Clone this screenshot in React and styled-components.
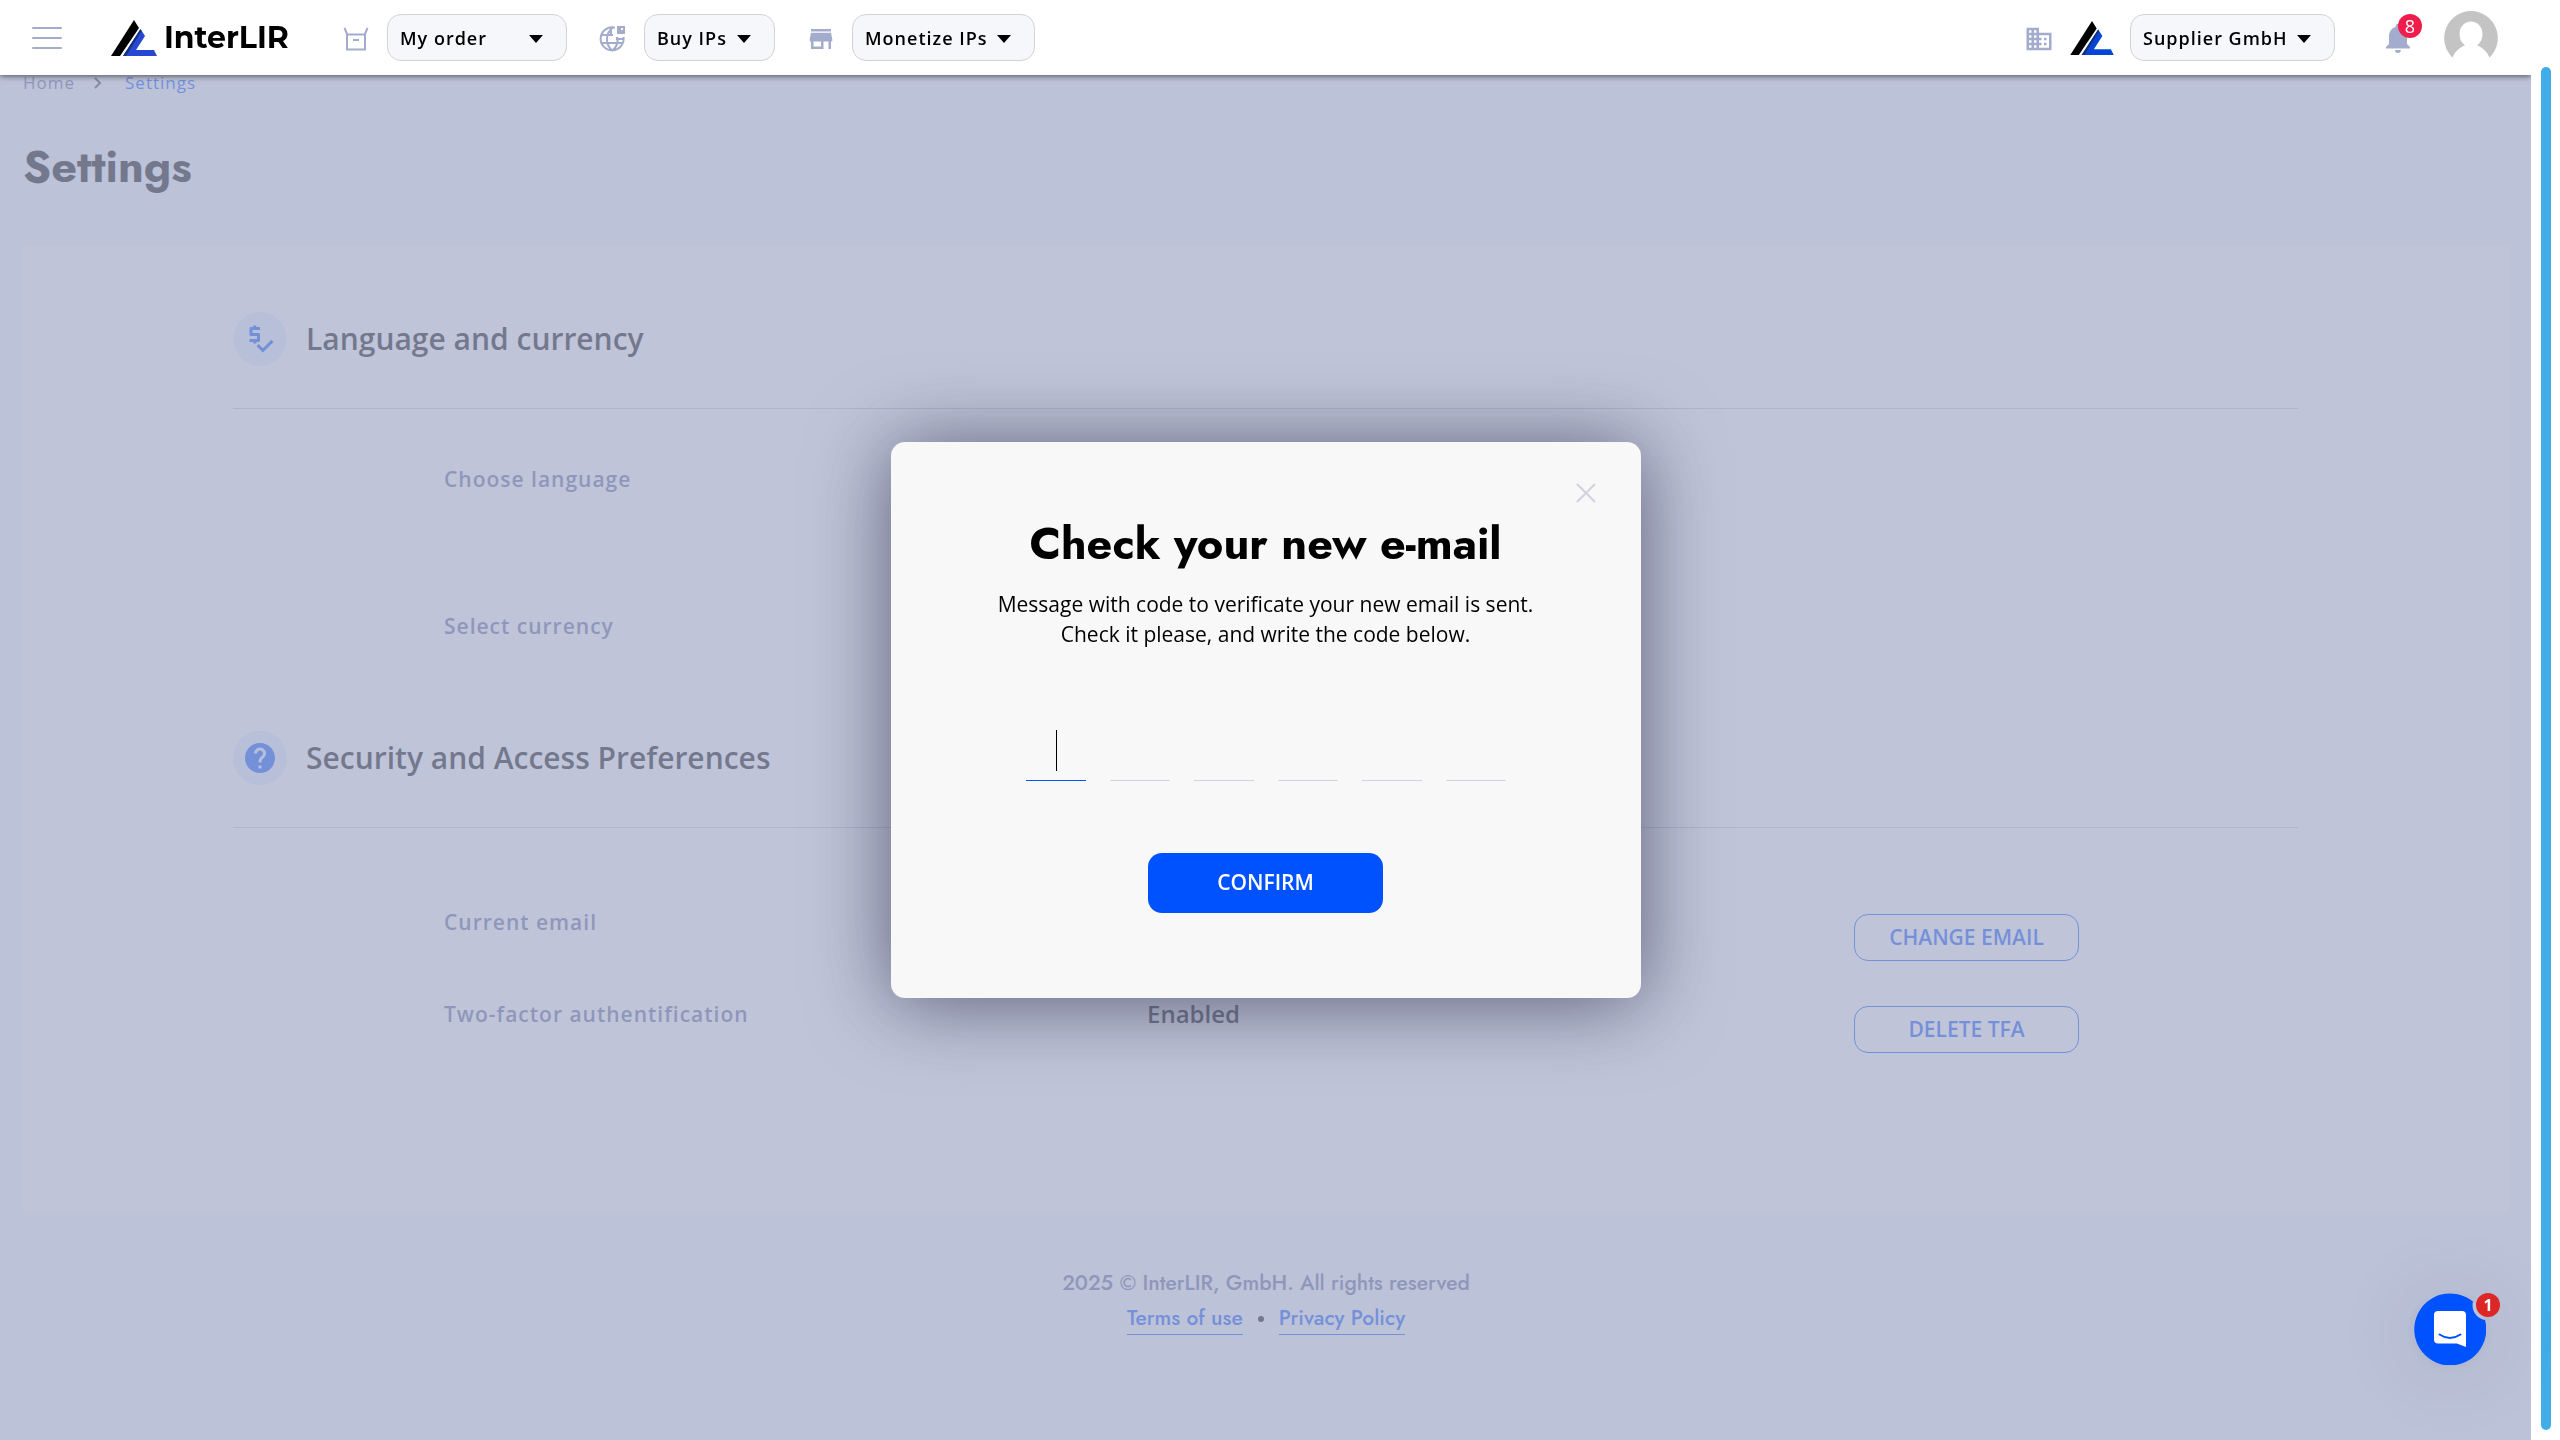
import { useState } from 'react';
import styled, { createGlobalStyle } from 'styled-components';
import { MdBusiness, MdHelp, MdNotifications, MdPriceCheck, MdStore } from 'react-icons/md';

const GlobalStyle = createGlobalStyle`
  *, *::before, *::after {
    box-sizing: border-box;
  }
  body {
    margin: 0;
    background: #f6f7fb;
    color: #000;
    font-family: 'Open Sans', 'Noto Sans', sans-serif;
    font-size: 21px;
  }
  button, input, select {
    font-family: inherit;
  }
`;

const RAIL = '29px';

const Page = styled.div`
  min-height: 100vh;
  padding-right: ${RAIL};
`;

// Header
const Header = styled.header`
  position: fixed;
  top: 0;
  left: 0;
  right: ${RAIL};
  z-index: 10;
  display: flex;
  align-items: center;
  height: 75px;
  padding: 0 33px 0 32px;
  background: #fff;
  box-shadow: 0 1px 6px rgba(0, 0, 0, 0.6);
`;

const MenuButton = styled.button`
  display: flex;
  flex-direction: column;
  justify-content: space-between;
  width: 30px;
  height: 22px;
  margin-right: 49px;
  padding: 0;
  border: 0;
  background: none;
  cursor: pointer;

  span {
    height: 2px;
    border-radius: 1px;
    background: #a3accc;
  }
`;

const Brand = styled.a`
  display: flex;
  align-items: center;
  gap: 7px;
  flex: 0 0 230px;
  color: #000;
  font-family: Montserrat, Inter, sans-serif;
  font-size: 30px;
  font-weight: 700;
  line-height: 36px;
  text-decoration: none;
`;

const Nav = styled.nav`
  display: flex;
  align-items: center;
  gap: 31px;
`;

const NavGroup = styled.div`
  display: flex;
  align-items: center;
  gap: 16px;
  color: #a3accc;
`;

const Account = styled(NavGroup)`
  margin-left: auto;
`;

const IconBox = styled.span`
  display: flex;
  align-items: center;
  justify-content: center;
  width: 30px;
  height: 30px;
  margin-top: 3px;
`;

const SelectWrap = styled.div`
  display: grid;
  align-items: center;
  width: ${({ $width }) => $width};

  > * {
    grid-area: 1 / 1;
  }
  svg {
    justify-self: end;
    margin-right: 24px;
    margin-top: 2px;
    pointer-events: none;
  }
`;

const Select = styled.select`
  appearance: none;
  width: 100%;
  height: 47px;
  padding: 0 12px;
  border: 1px solid #d3d3d3;
  border-radius: 14px;
  background: #f6f7fb;
  color: #000;
  font-size: 18px;
  font-weight: 600;
  letter-spacing: 1px;
`;

const BellButton = styled.button`
  position: relative;
  display: flex;
  margin-left: 29px;
  padding: 0;
  border: 0;
  background: none;
  color: #a3accc;
`;

const BellBadge = styled.span`
  position: absolute;
  top: -6px;
  right: -6px;
  width: 24px;
  height: 24px;
  border-radius: 50%;
  background: #f01c4b;
  color: #fff;
  font-size: 18px;
  line-height: 24px;
  text-align: center;
`;

const Avatar = styled.a`
  display: flex;
  margin-left: 12px;
`;

// Page content
const Main = styled.main`
  padding: 71px 22px 0 23px;
`;

const Breadcrumbs = styled.nav`
  display: flex;
  align-items: center;
  gap: 19px;
  font-size: 17px;
  line-height: 24px;
  letter-spacing: 1px;

  svg {
    margin-right: 4px;
  }
`;

const Crumb = styled.a`
  color: ${({ $current }) => ($current ? '#0052ff' : '#5d6896')};
  text-decoration: none;
`;

const Title = styled.h1`
  margin: 42px 0 49px;
  font-family: Jost, Lato, sans-serif;
  font-size: 45px;
  font-weight: 700;
  line-height: 60px;
`;

const Card = styled.div`
  padding: 66px 211px 0 210px;
  background: #fff;
`;

const SectionHead = styled.div`
  display: flex;
  align-items: center;
  gap: 19px;
  padding-bottom: 42px;
  border-bottom: 1px solid #c6c8d4;
`;

const SectionIcon = styled.span`
  display: flex;
  align-items: center;
  justify-content: center;
  width: 54px;
  height: 54px;
  border-radius: 50%;
  background: #e6edff;
  color: #0052ff;
`;

const SectionTitle = styled.h2`
  margin: 0;
  font-size: 30px;
  font-weight: 600;
  line-height: 42px;
`;

const Fields = styled.div`
  display: grid;
  gap: ${({ $gap }) => $gap};
  padding: ${({ $pad }) => $pad};
`;

const Field = styled.div`
  display: grid;
  grid-template-columns: 43% 1fr 225px;
  align-items: start;
  padding: 0 219px 0 211px;
  line-height: 30px;
`;

const FieldLabel = styled.span`
  color: #5d6896;
  font-weight: 600;
  letter-spacing: 1px;
`;

const FieldValue = styled.span`
  font-size: 24px;
  font-weight: 600;
`;

const OutlineButton = styled.button`
  height: 47px;
  margin-top: 7px;
  padding: 0 6px 2px;
  border: 1px solid #0052ff;
  border-radius: 14px;
  background: none;
  color: #0052ff;
  font-size: 21px;
  font-weight: 600;
`;

const Footer = styled.footer`
  padding: 52px 0;
  color: #5d6896;
  font-family: Jost, Lato, sans-serif;
  font-weight: 500;
  line-height: 36px;
  text-align: center;
`;

const FooterLinks = styled.div`
  display: flex;
  align-items: center;
  justify-content: center;
  gap: 15px;
  margin-top: 2px;

  a {
    border-bottom: 1px solid #0052ff;
    color: #0052ff;
    line-height: 31px;
    text-decoration: none;
  }
`;

const Dot = styled.span`
  width: 6px;
  height: 6px;
  border-radius: 50%;
  background: #000;
`;

// Modal
const Overlay = styled.div`
  position: fixed;
  inset: 0 ${RAIL} 0 0;
  z-index: 5;
  display: flex;
  align-items: center;
  justify-content: center;
  background: rgba(164, 171, 201, 0.7);
`;

const Dialog = styled.form`
  position: relative;
  display: flex;
  flex-direction: column;
  align-items: center;
  width: 750px;
  padding: 72px 60px 85px;
  border-radius: 14px;
  background: #f8f8f8;
  box-shadow: 0 4px 80px rgba(30, 32, 60, 0.62);
`;

const CloseButton = styled.button`
  position: absolute;
  top: 40px;
  right: 44px;
  display: flex;
  padding: 1px;
  border: 0;
  background: none;
`;

const DialogTitle = styled.h2`
  margin: 0;
  font-family: Jost, Lato, sans-serif;
  font-size: 45px;
  font-weight: 700;
  line-height: 60px;
`;

const DialogText = styled.p`
  margin: 15px 0 72px;
  line-height: 30px;
  text-align: center;
`;

const Code = styled.div`
  display: flex;
  gap: 24px;
`;

const Digit = styled.label`
  position: relative;
  display: flex;
`;

const DigitInput = styled.input`
  width: 60px;
  height: 60px;
  padding: 0;
  border: 0;
  border-bottom: 1px solid ${({ $active }) => ($active ? '#0052ff' : '#d0d2de')};
  outline: 0;
  background: none;
  caret-color: transparent;
  font-size: 30px;
  text-align: center;
`;

const Caret = styled.span`
  position: absolute;
  top: 9px;
  left: 50%;
  width: 1px;
  height: 41px;
  background: #000;
`;

const ConfirmButton = styled.button`
  width: 235px;
  height: 60px;
  margin-top: 72px;
  padding: 0 6px 2px;
  border: 0;
  border-radius: 14px;
  background: #0052ff;
  color: #fff;
  font-size: 21px;
  font-weight: 600;
`;

// Chat launcher and scroll rail
const Chat = styled.button`
  position: fixed;
  right: 74px;
  bottom: 75px;
  z-index: 20;
  width: 72px;
  height: 72px;
  padding: 0;
  border: 0;
  border-radius: 50%;
  background: none;
  box-shadow: 0 2px 12px rgba(0, 0, 0, 0.06), 0 4px 90px rgba(0, 0, 0, 0.12);

  svg {
    display: block;
  }
`;

const ChatBadge = styled.span`
  position: absolute;
  top: 0;
  right: -14px;
  width: 24px;
  height: 24px;
  border-radius: 50%;
  background: #dd2726;
  color: #fff;
  font-size: 16px;
  font-weight: 700;
  line-height: 24px;
  text-align: center;
`;

const Rail = styled.div`
  position: fixed;
  inset: 0 0 0 auto;
  z-index: 11;
  display: flex;
  justify-content: center;
  width: ${RAIL};
  padding: 67px 9px 10px 10px;
  background: #fff;
`;

const Thumb = styled.div`
  width: 10px;
  border-radius: 5px;
  background: #40ade9;
`;

const LogoMark = ({ blue = '#2748d2', width = 46, height = 36 }) => (
  <svg width={width} height={height} viewBox="0 0 46 36" aria-hidden="true">
    <path d="M23 0 28 8 9 36H0z" fill="#000" />
    <path d="M29.500 9 34 16 25 30H43L46 36H12z" fill={blue} />
    <path d="M29.500 9 30.500 11 15 36H12z" fill="#16307e" />
  </svg>
);

const OrderIcon = () => (
  <svg width="26" height="26" viewBox="0 0 26 26" fill="none" stroke="currentColor" strokeWidth="2">
    <path d="M1.500 2 4.500 9M24.500 2 21.500 9M4 8.500H22V23.500H4zM10 14H16" />
  </svg>
);

const GlobeIcon = () => (
  <svg width="28" height="28" viewBox="0 0 28 28" fill="none" stroke="currentColor" strokeWidth="2">
    <path d="M16 2.700A11.500 11.500 0 1 0 24.500 12M3 10H14M3 18H24M14 2.500C6 8 6 20 13.500 25.500C18 22 19 17 18.500 12.500M12 3V10M18 12V14H25" />
    <path d="M18 1H26V9H18z" fill="currentColor" stroke="none" />
    <path d="M22 3H24V5H22z" fill="#fff" stroke="none" />
  </svg>
);

const AvatarIcon = () => (
  <svg width="54" height="54" viewBox="0 0 54 54" aria-hidden="true">
    <path
      d="M27 0a27 27 0 0 0-18.500 46.500C11 41 15 36.500 21 34.500C17.500 32 15.500 28 15.500 23C15.500 16 20.500 10.500 27 10.500S38.500 16 38.500 23C38.500 28 36.500 32 33 34.500C39 36.500 43 41 45.500 46.500A27 27 0 0 0 27 0z"
      fill="#c4c4c4"
    />
  </svg>
);

const ChatIcon = () => (
  <svg width="72" height="72" viewBox="0 0 72 72" aria-hidden="true">
    <path d="M59 8.500A36 36 0 1 0 71 27A15 15 0 0 1 59 8.500z" fill="#0052ff" />
    <path d="M24 18H48Q52 18 52 22V54L43 50.500H24Q20 50.500 20 46.500V22Q20 18 24 18z" fill="#fff" />
    <path d="M25.500 41.500Q36 48.500 46.500 41.500" fill="none" stroke="#0052ff" strokeWidth="2" strokeLinecap="round" />
  </svg>
);

const HeaderSelect = ({ label, width }) => (
  <SelectWrap $width={width}>
    <Select aria-label={label}>
      <option>{label}</option>
    </Select>
    <svg width="14" height="8" viewBox="0 0 14 8">
      <path d="M0 0H14L7 8z" fill="#000" />
    </svg>
  </SelectWrap>
);

const navItems = [
  { label: 'My order', width: '180px', icon: <OrderIcon /> },
  { label: 'Buy IPs', width: '131px', icon: <GlobeIcon /> },
  { label: 'Monetize IPs', width: '183px', icon: <MdStore size={30} /> },
];

const App = () => {
  const [code, setCode] = useState(['', '', '', '', '', '']);
  const [active, setActive] = useState(0);

  const changeDigit = (index, value) => {
    setCode(code.map((digit, i) => (i === index ? value : digit)));
  };

  return (
    <Page>
      <GlobalStyle />
      <Header>
        <MenuButton type="button" aria-label="Menu">
          <span />
          <span />
          <span />
        </MenuButton>
        <Brand href="#">
          <LogoMark />
          InterLIR
        </Brand>
        <Nav>
          {navItems.map((item) => (
            <NavGroup key={item.label}>
              <IconBox>{item.icon}</IconBox>
              <HeaderSelect label={item.label} width={item.width} />
            </NavGroup>
          ))}
        </Nav>
        <Account>
          <IconBox>
            <MdBusiness size={30} />
          </IconBox>
          <LogoMark blue="#0646d6" width={44} height={34} />
          <HeaderSelect label="Supplier GmbH" width="205px" />
          <BellButton type="button" aria-label="Notifications">
            <MdNotifications size={36} />
            <BellBadge>8</BellBadge>
          </BellButton>
          <Avatar href="#" aria-label="Profile">
            <AvatarIcon />
          </Avatar>
        </Account>
      </Header>

      <Main>
        <Breadcrumbs>
          <Crumb href="#">Home</Crumb>
          <svg width="8" height="12" viewBox="0 0 8 12" fill="none" stroke="#3a4064" strokeWidth="2">
            <path d="M1 1 6 6 1 11" />
          </svg>
          <Crumb href="#" $current>Settings</Crumb>
        </Breadcrumbs>
        <Title>Settings</Title>
        <Card>
          <section>
            <SectionHead>
              <SectionIcon><MdPriceCheck size={36} /></SectionIcon>
              <SectionTitle>Language and currency</SectionTitle>
            </SectionHead>
            <Fields $gap="117px" $pad="55px 0 90px">
              <Field>
                <FieldLabel>Choose language</FieldLabel>
              </Field>
              <Field>
                <FieldLabel>Select currency</FieldLabel>
              </Field>
            </Fields>
          </section>
          <section>
            <SectionHead>
              <SectionIcon><MdHelp size={36} /></SectionIcon>
              <SectionTitle>Security and Access Preferences</SectionTitle>
            </SectionHead>
            <Fields $gap="38px" $pad="79px 0 160px">
              <Field>
                <FieldLabel>Current email</FieldLabel>
                <FieldValue />
                <OutlineButton type="button">CHANGE EMAIL</OutlineButton>
              </Field>
              <Field>
                <FieldLabel>Two-factor authentification</FieldLabel>
                <FieldValue>Enabled</FieldValue>
                <OutlineButton type="button">DELETE TFA</OutlineButton>
              </Field>
            </Fields>
          </section>
        </Card>
        <Footer>
          <div>2025 © InterLIR, GmbH. All rights reserved</div>
          <FooterLinks>
            <a href="#">Terms of use</a>
            <Dot />
            <a href="#">Privacy Policy</a>
          </FooterLinks>
        </Footer>
      </Main>

      <Overlay>
        <Dialog role="dialog" aria-labelledby="dialog-title" onSubmit={(e) => e.preventDefault()}>
          <CloseButton type="button" aria-label="Close">
            <svg width="20" height="20" viewBox="0 0 20 20" stroke="#d0d2de" strokeWidth="2">
              <path d="M1 1 19 19M19 1 1 19" />
            </svg>
          </CloseButton>
          <DialogTitle id="dialog-title">Check your new e-mail</DialogTitle>
          <DialogText>
            Message with code to verificate your new email is sent.
            <br />
            Check it please, and write the code below.
          </DialogText>
          <Code>
            {code.map((digit, index) => (
              <Digit key={index}>
                <DigitInput
                  aria-label={`Digit ${index + 1}`}
                  maxLength={1}
                  value={digit}
                  $active={index === active}
                  onFocus={() => setActive(index)}
                  onChange={(e) => changeDigit(index, e.target.value)}
                />
                {index === active && !digit && <Caret />}
              </Digit>
            ))}
          </Code>
          <ConfirmButton type="submit">CONFIRM</ConfirmButton>
        </Dialog>
      </Overlay>

      <Chat type="button" aria-label="Open chat">
        <ChatIcon />
        <ChatBadge>1</ChatBadge>
      </Chat>
      <Rail>
        <Thumb />
      </Rail>
    </Page>
  );
};

export default App;
